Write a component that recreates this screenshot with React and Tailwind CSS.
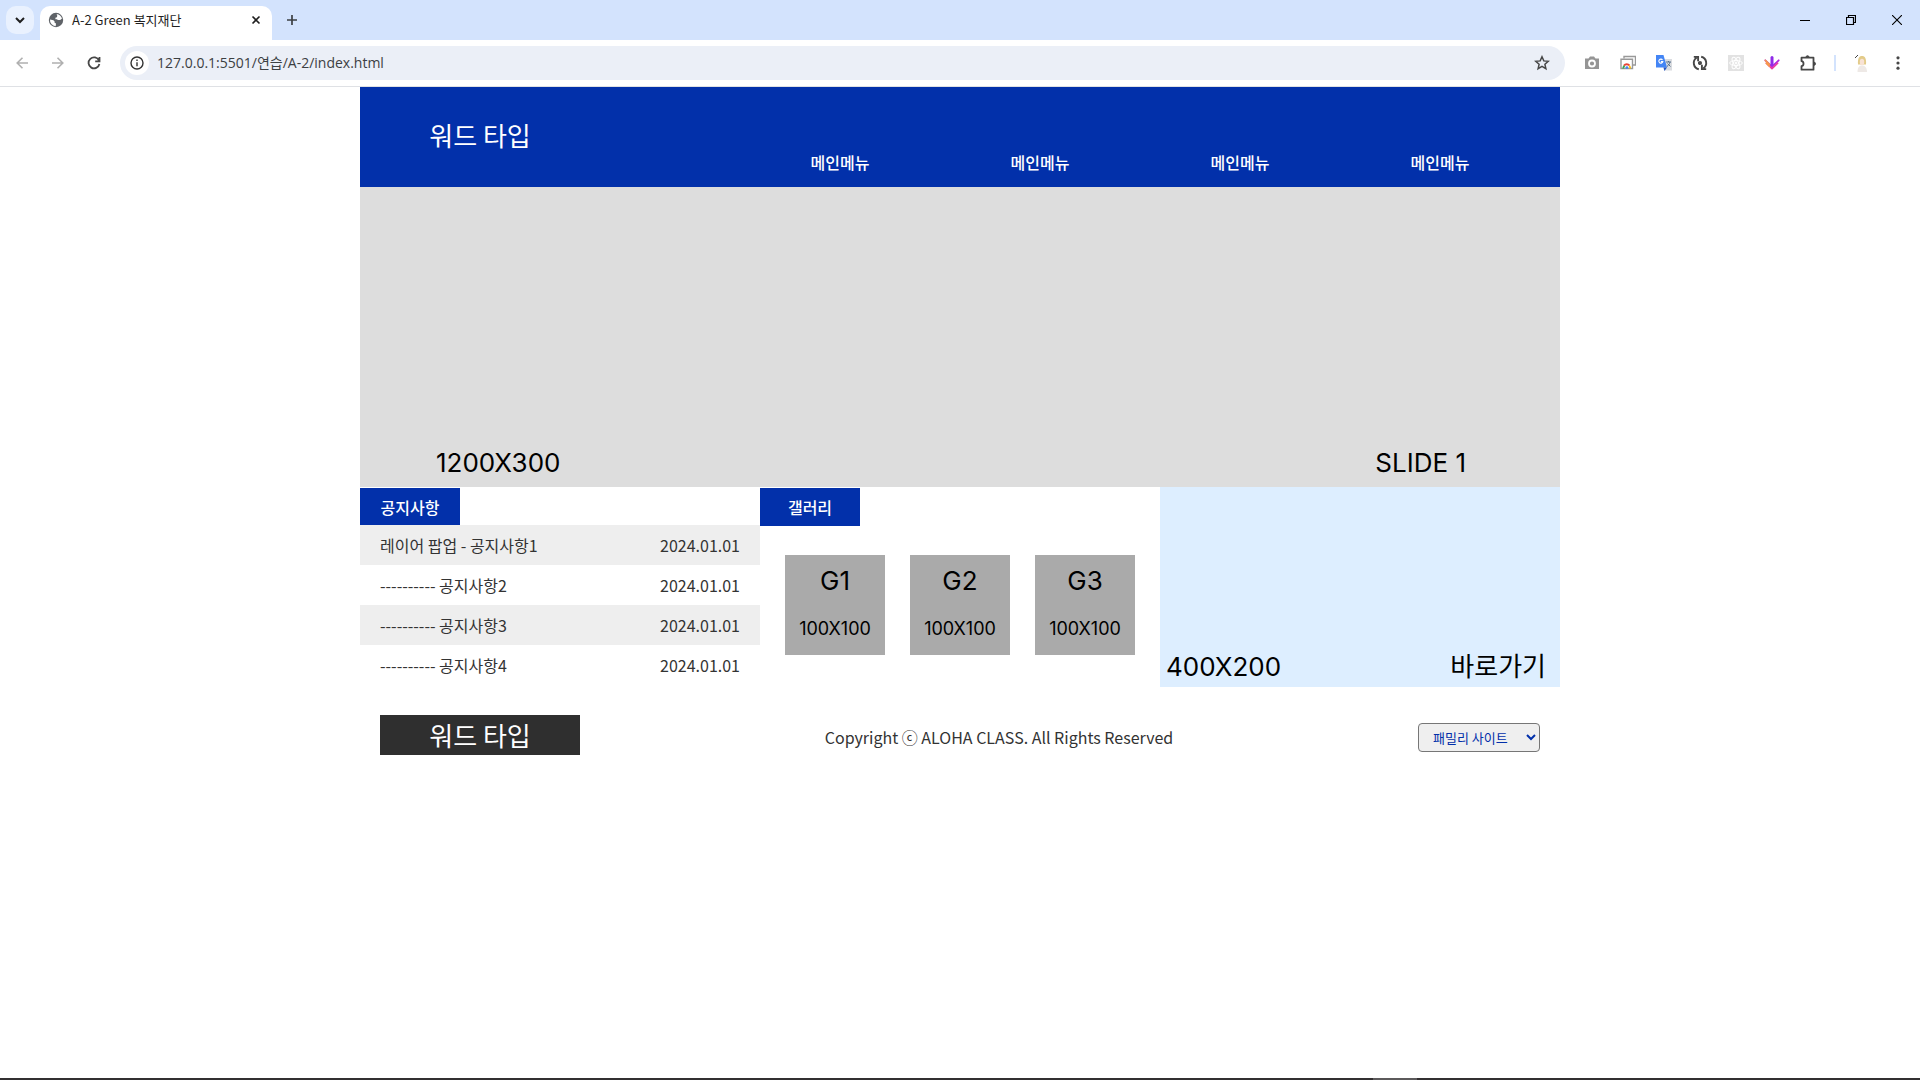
import React from "react";

const kr = "font-['Noto_Sans_CJK_KR',sans-serif]";
const ui = "font-['Open_Sans','Noto_Sans_CJK_KR',sans-serif]";

function ToolButton({ label, children }) {
  return (
    <button type="button" aria-label={label} className="flex h-9 w-9 shrink-0 items-center justify-center text-[#474747]">
      {children}
    </button>
  );
}

function Icon({ children, size = "h-4 w-4", fill = "none", w = 1.6, box = "0 0 16 16" }) {
  return (
    <svg viewBox={box} className={size} fill={fill} stroke={fill === "none" ? "currentColor" : "none"} strokeWidth={w}>
      {children}
    </svg>
  );
}

function TabStrip() {
  return (
    <div className="flex h-10 items-end bg-[#d3e3fd]">
      <button type="button" aria-label="탭 검색" className="mb-[6px] ml-[6px] flex h-7 w-7 items-center justify-center rounded-[10px] bg-[#e9f1fe] text-[#1f1f1f]">
        <Icon size="h-3 w-3" box="0 0 12 12" w={2}><path d="M2 4l4 4 4-4" /></Icon>
      </button>
      <div className="ml-[6px] flex h-[34px] w-[232px] items-center rounded-t-[10px] bg-white pb-[6px] pl-2 pr-2">
        <svg viewBox="0 0 16 16" className="h-4 w-4 shrink-0">
          <circle cx="8" cy="8" r="7.2" fill="#5f6368" />
          <path d="M8.6 1.9c2.6.3 4.8 2.2 5.4 4.7L12.200 8H9.800L9 7.200H7.400V5.700l1.500-.5.4-1.500zM2 7.400l3.400.8 1.200 1.200v1.400l1.400.8-.3 2.6A6.200 6.200 0 0 1 2 7.400z" fill="#fff" />
        </svg>
        <span className="ml-2 grow whitespace-nowrap font-['Noto_Sans_CJK_KR',sans-serif] text-[13px] leading-5 text-[#1f1f1f]">A-2 Green 복지재단</span>
        <button type="button" aria-label="탭 닫기" className="flex h-4 w-4 items-center justify-center text-[#1f1f1f]">
          <Icon size="h-[10px] w-[10px]" box="0 0 10 10"><path d="M1.500 1.500l7 7M8.500 1.500l-7 7" /></Icon>
        </button>
      </div>
      <button type="button" aria-label="새 탭" className="mb-[6px] ml-[6px] flex h-7 w-7 items-center justify-center text-[#3c4043]">
        <Icon size="h-3 w-3" box="0 0 12 12" w={1.7}><path d="M6 1v10M1 6h10" /></Icon>
      </button>
      <div className="ml-auto flex h-10 text-black">
        <button type="button" aria-label="최소화" className="flex w-[46px] items-center justify-center">
          <Icon size="h-[10px] w-[10px]" box="0 0 10 10" w={1}><path d="M0 5.500h10" /></Icon>
        </button>
        <button type="button" aria-label="이전 크기로 복원" className="flex w-[46px] items-center justify-center">
          <Icon size="h-[10px] w-[10px]" box="0 0 10 10" w={1.2}><path d="M.5 2.500h7v7h-7zM2.500 2.500v-2h7v7h-2" /></Icon>
        </button>
        <button type="button" aria-label="닫기" className="flex w-[46px] items-center justify-center">
          <Icon size="h-[10px] w-[10px]" box="0 0 10 10" w={1.1}><path d="M0 0l10 10M10 0L0 10" /></Icon>
        </button>
      </div>
    </div>
  );
}

function AddressBar() {
  return (
    <div className="flex h-[47px] items-center border-b border-[#dfe1e5] bg-white pl-1 pr-1">
      <button type="button" aria-label="뒤로" className="flex w-9 items-center justify-center text-[#b0b0b0]">
        <Icon size="h-3 w-3" box="0 0 12 12"><path d="M12 6H1M6.500.7L1.200 6l5.300 5.300" /></Icon>
      </button>
      <button type="button" aria-label="앞으로" className="flex w-9 items-center justify-center text-[#b0b0b0]">
        <Icon size="h-3 w-3" box="0 0 12 12"><path d="M0 6h11M5.500.7L10.800 6l-5.300 5.300" /></Icon>
      </button>
      <button type="button" aria-label="새로고침" className="flex w-9 items-center justify-center text-[#474747]">
        <Icon w={1.8}><path d="M13 5.500A5.500 5.500 0 1 0 13.400 9M13.500 2v4.300H9.200" /></Icon>
      </button>
      <div className="ml-2 flex h-[34px] grow items-center rounded-full bg-[#ebeff7] pl-[5px] pr-[15px]">
        <button type="button" aria-label="사이트 정보 보기" className="flex h-6 w-6 items-center justify-center rounded-full bg-white text-[#333]">
          <Icon size="h-[14px] w-[14px]" box="0 0 14 14" w={1.4}><circle cx="7" cy="7" r="6" /><path d="M7 6.200v4M7 3.500v1.400" /></Icon>
        </button>
        <input aria-label="주소" defaultValue="127.0.0.1:5501/연습/A-2/index.html" className="ml-2 min-w-0 grow bg-transparent text-sm text-[#3c4043] outline-none" />
        <button type="button" aria-label="북마크" className="text-[#474747]">
          <Icon w={1.5}><path d="M8 1.800l1.800 4.100 4.500.4-3.400 3 1 4.400L8 11.400l-3.900 2.300 1-4.400-3.400-3 4.500-.4z" /></Icon>
        </button>
      </div>
      <div className="ml-[9px] flex items-center">
        <ToolButton label="스크린샷">
          <svg viewBox="0 0 16 16" className="h-4 w-4"><path d="M1 3.500h3.500L6 1.500h4l1.500 2H15V14H1z" fill="#959595" /><circle cx="8" cy="8.500" r="3" fill="#959595" stroke="#fff" strokeWidth="1.800" /></svg>
        </ToolButton>
        <ToolButton label="창 캡처">
          <svg viewBox="0 0 16 16" className="h-4 w-4" fill="none"><path d="M4 3.500V1.500h11.500V10H13" stroke="#999" strokeWidth="1.400" /><path d="M1 4.200h11.500v9.300H1z" fill="#fff" stroke="#999" strokeWidth="1.400" /><path d="M3.300 13.500a3.700 3.700 0 0 1 1.300-3" stroke="#34a853" strokeWidth="1.800" /><path d="M4 10.500a3.500 3.500 0 0 1 5.500 0" stroke="#ea4335" strokeWidth="2" /><path d="M9.300 10.800a3.700 3.700 0 0 1 .9 2.700" stroke="#fbbc04" strokeWidth="1.600" /><circle cx="6.900" cy="12.600" r="1.400" fill="#4285f4" /></svg>
        </ToolButton>
        <ToolButton label="번역">
          <svg viewBox="0 0 16 16" className="h-4 w-4"><path d="M6 4h10v11.500H8z" fill="#dadce0" /><path d="M0 0h7.500l3.500 12.500H0z" fill="#4385f5" /><path d="M7.500 12.500H11L8.500 16z" fill="#2455c3" /><path d="M6.500 5A2 2 0 1 0 6.800 6.600H4.900" fill="none" stroke="#fff" strokeWidth="1.100" /><path d="M10 7h5M12.500 6v1M14 7c-.4 2-1.500 3.300-3 4.500M11.500 8.500l3 3" fill="none" stroke="#56708c" /></svg>
        </ToolButton>
        <ToolButton label="새로고침 도구">
          <Icon w={1.9}><path d="M6.800 14.200A6.300 6.300 0 0 1 4.600 2.800M1.800 1.900h4.300v4.300M9.200 1.800a6.300 6.300 0 0 1 2.200 11.400M14.200 14.100H9.900V9.800" /><circle cx="8" cy="8" r="1.100" /></Icon>
        </ToolButton>
        <ToolButton label="React 도구">
          <svg viewBox="0 0 16 16" className="h-4 w-4" fill="none" stroke="#fff"><path d="M0 0h16v16H0z" fill="#e2e2e2" stroke="none" /><ellipse cx="8" cy="8" rx="6.300" ry="2.500" /><ellipse cx="8" cy="8" rx="6.300" ry="2.500" transform="rotate(60 8 8)" /><ellipse cx="8" cy="8" rx="6.300" ry="2.500" transform="rotate(120 8 8)" /><circle cx="8" cy="8" r="1" fill="#fff" /></svg>
        </ToolButton>
        <ToolButton label="다운로드 도구">
          <svg viewBox="0 0 16 14" className="h-[14px] w-4" fill="none" strokeLinecap="round" strokeLinejoin="round">
            <path d="M1.300 4.300L8 10.700l6.700-6.400" stroke="#b026e0" strokeWidth="1.800" />
            <path d="M2.300 7.200L8 12.700l5.700-5.500" stroke="#e839a0" strokeWidth="1.600" />
            <path d="M1.300 4.300l4.200 4M2.300 7.200l3 3" stroke="#f79a4d" strokeWidth="1.600" />
            <path d="M8 1.500v7" stroke="#8f2be8" strokeWidth="3" />
          </svg>
        </ToolButton>
        <ToolButton label="확장 프로그램">
          <Icon size="h-[18px] w-[18px]" box="0 0 18 18" w={1.8}><path d="M2.500 3.700h12v12h-12v-3.500c2.700-.4 2.700-4.600 0-5z" strokeLinejoin="round" /><path d="M7 3.200a1.500 1.500 0 0 1 3 0zM15 8.200a1.500 1.500 0 0 1 0 3z" fill="currentColor" strokeWidth="1" /></Icon>
        </ToolButton>
        <span className="mx-2 h-4 w-[2px] bg-[#d3e3fd]" />
        <ToolButton label="프로필">
          <svg viewBox="0 0 16 18" className="h-[18px] w-4"><path d="M1 4l3-3" stroke="#444" /><path d="M3.500 18c0-5 2-6.500 4.500-6.500s5 1.500 5 6.500z" fill="#eee9e6" /><path d="M4 10.500c-.5-6 1-8.500 4-8.500s4.500 2.500 4 8.500z" fill="#e3cb8a" /><ellipse cx="8" cy="8" rx="2.200" ry="3.300" fill="#f8e2d4" /></svg>
        </ToolButton>
        <ToolButton label="Chrome 메뉴">
          <Icon fill="currentColor"><circle cx="8" cy="2.800" r="1.600" /><circle cx="8" cy="8" r="1.600" /><circle cx="8" cy="13.200" r="1.600" /></Icon>
        </ToolButton>
      </div>
    </div>
  );
}

function SiteHeader() {
  return (
    <header className="flex h-[100px] items-end justify-between bg-[#0230aa] px-5 text-white">
      <a href="#home" className="mb-8 flex h-10 w-[200px] items-center justify-center text-[26px] leading-10">워드 타입</a>
      <nav className="flex max-w-[800px] grow">
        {["company", "business", "support", "contact"].map((id) => (
          <a key={id} href={"#" + id} className="flex h-[50px] flex-1 items-center justify-center font-medium">메인메뉴</a>
        ))}
      </nav>
    </header>
  );
}

const notices = ["레이어 팝업 - 공지사항1", "---------- 공지사항2", "---------- 공지사항3", "---------- 공지사항4"];

function Contents() {
  return (
    <section className="grid min-h-[200px] grid-cols-3">
      <div className="pt-px">
        <h2 className="flex h-[37px] w-[100px] items-center justify-center bg-[#0230aa] font-medium text-white">공지사항</h2>
        <ul>
          {notices.map((title) => (
            <li key={title} className="odd:bg-[#eee]">
              <a href="#notice" className="flex h-10 items-center justify-between px-5">
                <span>{title}</span>
                <span>2024.01.01</span>
              </a>
            </li>
          ))}
        </ul>
      </div>
      <div className="pt-px">
        <h2 className="flex h-[38px] w-[100px] items-center justify-center bg-[#0230aa] font-medium text-white">갤러리</h2>
        <div className="flex justify-evenly pt-[29px] font-['Inter',sans-serif] text-black">
          {["G1", "G2", "G3"].map((name) => (
            <a key={name} href={"#" + name} className="flex h-[100px] w-[100px] flex-col items-center bg-[#aaa] pt-2">
              <span className="text-[26px] leading-9">{name}</span>
              <span className="mt-3 text-lg leading-9">100X100</span>
            </a>
          ))}
        </div>
      </div>
      <a href="#shortcut" className="flex items-end justify-between bg-[#def] pl-[6px] pr-[14px] font-['Inter','Noto_Sans_CJK_KR',sans-serif] text-[26px] leading-10 text-black">
        <span>400X200</span>
        <span>바로가기</span>
      </a>
    </section>
  );
}

function SiteFooter() {
  return (
    <footer className="flex h-[100px] items-center justify-between px-5">
      <a href="#home" className="mb-1 flex h-10 w-[200px] items-center justify-center bg-[#2f2f2f] text-[26px] leading-10 text-white">워드 타입</a>
      <p>Copyright ⓒ ALOHA CLASS. All Rights Reserved</p>
      <select aria-label="패밀리 사이트" className="h-[29px] w-[122px] rounded border border-[#767676] bg-[#efefef] px-[10px] text-[13px] text-[#0230aa]">
        <option>패밀리 사이트</option>
      </select>
    </footer>
  );
}

export default function App() {
  return (
    <div className="flex min-h-screen flex-col bg-white">
      <div className={ui}>
        <TabStrip />
        <AddressBar />
      </div>
      <main className={"mx-auto w-full max-w-[1200px] grow text-base text-[#333] " + kr}>
        <SiteHeader />
        <section aria-label="슬라이드" className="flex h-[300px] items-end justify-between bg-[#ddd] pb-1 pl-[76px] pr-[94px] font-['Inter',sans-serif] text-[26px] leading-10 text-black">
          <span>1200X300</span>
          <span>SLIDE 1</span>
        </section>
        <Contents />
        <SiteFooter />
      </main>
      <div className="flex h-[2px] bg-[#333031]">
        <span className="ml-[71.5%] w-11 bg-[#5c5a5b]" />
      </div>
    </div>
  );
}
